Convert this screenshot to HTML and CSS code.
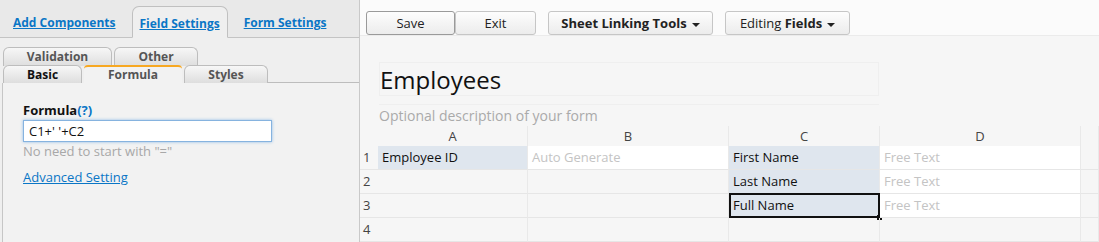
FILE: index.html
```html
<!DOCTYPE html>
<html lang="en">
<head>
    <meta charset="UTF-8">
    <title>Form Builder</title>
    <link rel="stylesheet" href="styles.css">
</head>
<body>
    <div class="sidebar">
        <div class="top-tabs">
            <a class="top-tab" href="#">Add Components</a>
            <a class="top-tab active" href="#">Field Settings</a>
            <a class="top-tab" href="#">Form Settings</a>
        </div>
        <div class="tab-body">
            <div class="sub-row">
                <span class="sub-tab w-validation">Validation</span>
                <span class="sub-tab w-other">Other</span>
            </div>
            <div class="sub-row front">
                <span class="sub-tab w-basic dark">Basic</span>
                <span class="sub-tab w-formula active">Formula</span>
                <span class="sub-tab w-styles">Styles</span>
                <span class="sub-fill"></span>
            </div>
            <div class="settings">
                <label class="field-label">Formula<a href="#">(?)</a></label>
                <input class="formula-input" type="text" value="C1+' '+C2">
                <div class="hint">No need to start with "="</div>
                <a class="adv-link" href="#">Advanced Setting</a>
            </div>
        </div>
    </div>

    <div class="main">
        <div class="toolbar">
            <button class="btn btn-save">Save</button>
            <button class="btn btn-exit">Exit</button>
            <button class="btn btn-link"><b>Sheet Linking Tools</b><span class="caret"></span></button>
            <button class="btn btn-mode">Editing <b>Fields</b><span class="caret"></span></button>
        </div>
        <div class="canvas">
            <div class="form-title">Employees</div>
            <div class="form-desc">Optional description of your form</div>
            <div class="sheet">
                <div class="cell head rn"></div>
                <div class="cell head">A</div>
                <div class="cell head">B</div>
                <div class="cell head">C</div>
                <div class="cell head">D</div>
                <div class="cell head"></div>

                <div class="cell rn">1</div>
                <div class="cell label">Employee ID</div>
                <div class="cell input">Auto Generate</div>
                <div class="cell label">First Name</div>
                <div class="cell input">Free Text</div>
                <div class="cell"></div>

                <div class="cell rn">2</div>
                <div class="cell"></div>
                <div class="cell"></div>
                <div class="cell label">Last Name</div>
                <div class="cell input">Free Text</div>
                <div class="cell"></div>

                <div class="cell rn">3</div>
                <div class="cell"></div>
                <div class="cell"></div>
                <div class="cell label selected">Full Name<span class="handle"></span></div>
                <div class="cell input">Free Text</div>
                <div class="cell"></div>

                <div class="cell rn">4</div>
                <div class="cell"></div>
                <div class="cell"></div>
                <div class="cell"></div>
                <div class="cell"></div>
                <div class="cell"></div>
            </div>
        </div>
    </div>
</body>
</html>
```

FILE: styles.css
```css
body {
    margin: 0;
    display: flex;
    height: 242px;
    overflow: hidden;
    font-family: 'Open Sans', 'Noto Sans', sans-serif;
    font-size: 13px;
    color: #222;
}
a {
    color: #0a76c6;
}

/* left panel */
.sidebar {
    width: 359px;
    border-right: 1px solid #c9c9c9;
    background-color: #e9e9e9;
    display: flex;
    flex-direction: column;
}
.top-tabs {
    height: 37px;
    display: flex;
    align-items: flex-end;
    gap: 7px;
    padding-left: 4px;
    border-bottom: 1px solid #c4c4c4;
}
.top-tab {
    font-size: 12px;
    font-weight: bold;
    white-space: nowrap;
    padding: 0 8px;
    height: 32px;
    line-height: 32px;
    margin-bottom: -1px;
    box-sizing: border-box;
    border: 1px solid transparent;
}
.top-tab.active {
    background-color: #efefef;
    border-color: #c0c0c0;
    border-bottom-color: #efefef;
    border-radius: 7px 7px 0 0;
    padding: 0 7px;
    line-height: 34px;
}
.tab-body {
    flex: 1;
    background-color: #efefef;
    padding-top: 9px;
    display: flex;
    flex-direction: column;
}
.sub-row {
    display: flex;
    padding-left: 3px;
    height: 18px;
}
.sub-tab {
    box-sizing: border-box;
    height: 19px;
    line-height: 18px;
    text-align: center;
    font-size: 12px;
    font-weight: bold;
    color: #555;
    border: 1px solid #bdbdbd;
    border-bottom: none;
    border-radius: 6px 6px 0 0;
    background: linear-gradient(#f7f7f7, #dedede);
    margin-right: 2px;
}
.sub-row.front .sub-tab {
    height: 18px;
}
.sub-tab.dark {
    color: #111;
}
.sub-tab.active {
    background: #f2f2f2;
    border: none;
    border-top: 2px solid #f7a822;
    line-height: 16px;
    border-radius: 4px 4px 0 0;
}
.sub-fill {
    flex: 1;
    border-bottom: 1px solid #bdbdbd;
    margin-left: -2px;
}
.w-validation { width: 109px; }
.w-other { width: 84px; }
.w-basic { width: 79px; }
.w-formula { width: 98px; }
.w-styles { width: 84px; }

.settings {
    flex: 1;
    margin-left: 2px;
    border-left: 1px solid #c6c6c6;
    background-color: #f2f2f2;
    padding: 18px 0 0 20px;
    display: flex;
    flex-direction: column;
    align-items: flex-start;
}
.field-label {
    font-weight: bold;
    color: #111;
    line-height: 18px;
}
.field-label a {
    text-decoration: none;
}
.formula-input {
    margin-top: 1px;
    width: 249px;
    height: 22px;
    box-sizing: border-box;
    border: 1px solid #86b3df;
    box-shadow: 0 0 3px #8ebbe6;
    font-family: inherit;
    font-size: 13px;
    padding: 0 5px;
    color: #111;
}
.hint {
    color: #a8a8a8;
    line-height: 18px;
}
.adv-link {
    margin-top: 8px;
    line-height: 18px;
}

/* right side */
.main {
    flex: 1;
    display: flex;
    flex-direction: column;
    background-color: #f6f6f6;
}
.toolbar {
    height: 37px;
    background-color: #fbfbfb;
    border-bottom: 1px solid #ebebeb;
    display: flex;
    align-items: flex-end;
    padding-left: 6px;
}
.btn {
    height: 24px;
    box-sizing: border-box;
    border: 1px solid #c6c6c6;
    border-radius: 3px;
    background: linear-gradient(#fdfdfd, #ececec);
    font-family: inherit;
    font-size: 13px;
    color: #222;
    padding: 0;
}
.btn-save {
    width: 89px;
    border-color: #9a9a9a;
}
.btn-exit {
    width: 81px;
    margin-right: 12px;
}
.btn-link {
    width: 165px;
    margin-right: 12px;
}
.btn-mode {
    width: 125px;
}
.caret {
    display: inline-block;
    margin-left: 5px;
    vertical-align: middle;
    border-left: 4px solid transparent;
    border-right: 4px solid transparent;
    border-top: 4px solid #222;
}

.canvas {
    padding-top: 26px;
    display: flex;
    flex-direction: column;
}
.form-title {
    margin-left: 19px;
    width: 500px;
    height: 34px;
    box-sizing: border-box;
    border: 1px solid #efefef;
    font-size: 24px;
    line-height: 34px;
    color: #111;
}
.form-desc {
    margin-top: 8px;
    margin-left: 19px;
    width: 500px;
    height: 21px;
    border-top: 1px solid #efefef;
    font-size: 14px;
    line-height: 22px;
    color: #aaa;
}
.sheet {
    display: grid;
    grid-template-columns: 18px 150px 201px 151px 201px 18px;
    grid-auto-rows: 24px;
    grid-template-rows: 20px;
}
.cell {
    box-sizing: border-box;
    border-bottom: 1px solid #e6e6e6;
    border-right: 1px solid #e9e9e9;
    padding-left: 4px;
    line-height: 23px;
    white-space: nowrap;
    position: relative;
}
.cell.head {
    text-align: center;
    color: #444;
    line-height: 20px;
    padding-left: 0;
    border-bottom: none;
}
.cell.rn {
    color: #444;
    padding-left: 3px;
    border-right: none;
}
.cell.label {
    background-color: #dfe6ee;
    color: #111;
}
.cell.input {
    background-color: #fff;
    color: #c4c4c4;
}
.cell.selected {
    border: 2px solid #111;
    line-height: 20px;
    padding-left: 2px;
    margin-top: -1px;
    height: 25px;
}
.handle {
    position: absolute;
    right: -4px;
    bottom: -4px;
    width: 5px;
    height: 5px;
    background-color: #111;
}
```
